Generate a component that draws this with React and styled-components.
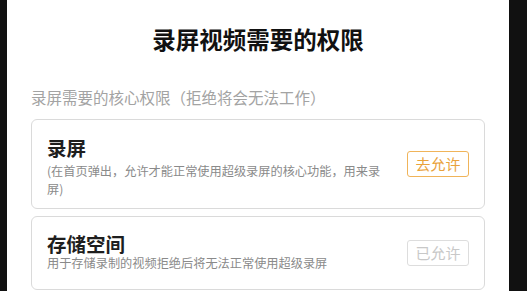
// Section : Permission sheet
// Style : White panel with title, hint and permission cards

import styled, { createGlobalStyle } from "styled-components";

const GlobalStyle = createGlobalStyle`
    html, body {
        margin: 0;
        padding: 0;
        background: #111111;
    }
    body {
        font-family: "Noto Sans CJK SC", "Noto Sans", sans-serif;
    }
`;

const permissions = [
    {
        name: "录屏",
        desc: "(在首页弹出，允许才能正常使用超级录屏的核心功能，用来录屏)",
        granted: false,
        height: 90,
        top: 19,
        gap: 4,
        lineHeight: 18,
    },
    {
        name: "存储空间",
        desc: "用于存储录制的视频拒绝后将无法正常使用超级录屏",
        granted: true,
        height: 74,
        top: 18,
        gap: 1,
        lineHeight: 16,
    },
];

const App = () => {
    return (
        <>
            <GlobalStyle />
            <Screen>
                <Panel>
                    <Title>录屏视频需要的权限</Title>
                    <Hint>录屏需要的核心权限（拒绝将会无法工作）</Hint>
                    <CardList>
                        {permissions.map((item) => (
                            <Card key={item.name} $height={item.height}>
                                <Info $top={item.top}>
                                    <Name>{item.name}</Name>
                                    <Desc $gap={item.gap} $lineHeight={item.lineHeight}>
                                        {item.desc}
                                    </Desc>
                                </Info>
                                <AllowButton $granted={item.granted}>
                                    {item.granted ? "已允许" : "去允许"}
                                </AllowButton>
                            </Card>
                        ))}
                    </CardList>
                </Panel>
            </Screen>
        </>
    );
};
export default App;

const Screen = styled.div`
    width: 527px;
    height: 291px;
    overflow: hidden;
    background: #111111;
    padding-left: 7px;
    box-sizing: border-box;
`;

const Panel = styled.div`
    width: 502px;
    height: 100%;
    background: #ffffff;
    padding: 23px 24px 0;
    box-sizing: border-box;
    display: flex;
    flex-direction: column;
`;

const Title = styled.h1`
    margin: 0;
    text-align: center;
    font-size: 23.5px;
    line-height: 32px;
    font-weight: 700;
    color: #111111;
`;

const Hint = styled.p`
    margin: 31px 0 0;
    font-size: 15.5px;
    line-height: 22px;
    color: #a3a3a3;
`;

const CardList = styled.div`
    margin-top: 11px;
    display: flex;
    flex-direction: column;
    gap: 7px;
`;

const Card = styled.div`
    height: ${(p) => p.$height}px;
    border: 1px solid #dadada;
    border-radius: 6px;
    padding: 0 15px;
    box-sizing: border-box;
    display: flex;
    justify-content: space-between;
    align-items: center;
`;

const Info = styled.div`
    align-self: stretch;
    max-width: 344px;
    padding-top: ${(p) => p.$top - 1}px;
    box-sizing: border-box;
`;

const Name = styled.div`
    font-size: 19.5px;
    line-height: 20px;
    font-weight: 700;
    color: #1e1e1e;
`;

const Desc = styled.div`
    margin-top: ${(p) => p.$gap}px;
    font-size: 12.2px;
    line-height: ${(p) => p.$lineHeight}px;
    color: #8a8a8a;
`;

const AllowButton = styled.button`
    width: 62px;
    height: 26px;
    padding: 0;
    border-radius: 3px;
    border: 1px solid ${(p) => (p.$granted ? "#dddddd" : "#f0b45a")};
    background: #ffffff;
    color: ${(p) => (p.$granted ? "#c8c8c8" : "#e9a23b")};
    font-family: "Noto Sans CJK SC", "Noto Sans", sans-serif;
    font-size: 15px;
    line-height: 24px;
    flex-shrink: 0;
`;
